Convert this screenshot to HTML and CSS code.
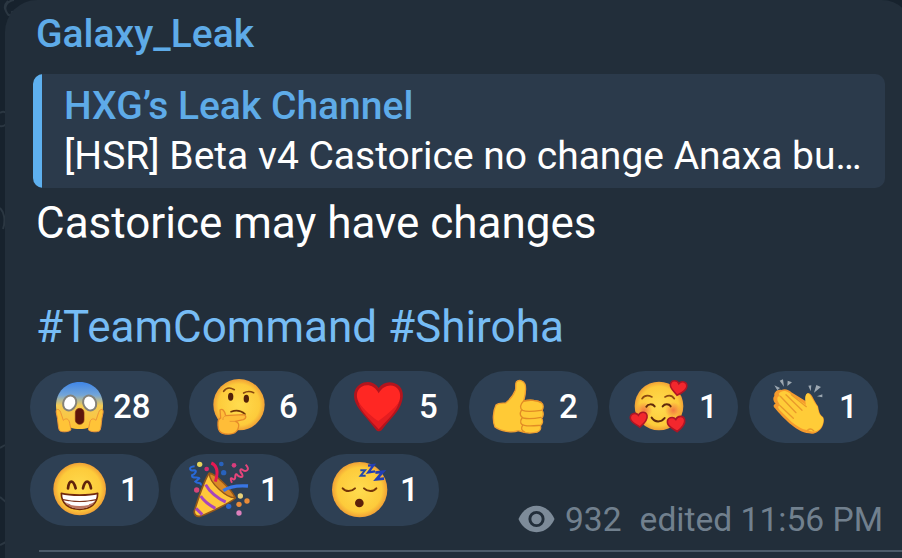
FILE: index.html
```html
<!DOCTYPE html>
<html lang="en">
<head>
    <meta charset="UTF-8">
    <meta name="viewport" content="width=device-width, initial-scale=1.0">
    <link rel="stylesheet" href="styles.css">
    <title>Galaxy_Leak</title>
</head>
<body>

<!-- Chat wallpaper doodles -->
<svg class="wallpaper" width="30" height="558" viewBox="0 0 30 558">
    <path d="M14 0C7 1 3 7 7 13C9 17 13 15 12 11M8 1C5 4 4 8 6 11M0 113C4 110 8 113 8 118C8 124 4 127 0 126M0 208C4 212 6 220 3 229M0 448L5 445M0 497L7 503M0 545L6 542"/>
</svg>

<div class="bubble">
    <div class="sender">Galaxy_Leak</div>

    <div class="quote">
        <div class="quote-title">HXG’s Leak Channel</div>
        <div class="quote-text">[HSR] Beta v4 Castorice no change Anaxa bu…</div>
    </div>

    <div class="message">Castorice may have changes<br><br><span class="hashtag">#TeamCommand</span> <span class="hashtag">#Shiroha</span></div>

    <div class="reactions">
        <!-- Screaming -->
        <div class="reaction wide">
            <svg viewBox="78 45 192 192">
                <defs>
                    <linearGradient id="scream" x1="0" y1="0" x2="0" y2="1">
                        <stop offset="0" stop-color="#3f86e8"/>
                        <stop offset=".28" stop-color="#73a5d8"/>
                        <stop offset=".5" stop-color="#f3cb55"/>
                        <stop offset="1" stop-color="#ffc334"/>
                    </linearGradient>
                    <radialGradient id="face">
                        <stop offset="0" stop-color="#ffdc4f"/>
                        <stop offset=".8" stop-color="#fdcb3b"/>
                        <stop offset="1" stop-color="#f0a036"/>
                    </radialGradient>
                </defs>
                <path d="M179 66C220 66 249 96 249 137C249 180 219 207 179 207C139 207 108 180 108 137C108 96 138 66 179 66Z" fill="url(#scream)"/>
                <ellipse cx="149" cy="129" rx="19" ry="23" fill="#fff" stroke="#84827a" stroke-width="6" transform="rotate(25 149 129)"/>
                <ellipse cx="209" cy="129" rx="19" ry="23" fill="#fff" stroke="#84827a" stroke-width="6" transform="rotate(-25 209 129)"/>
                <rect x="166" y="145" width="26" height="48" rx="13" fill="#5d160b" stroke="#7b2c10" stroke-width="2"/>
                <path d="M109 159C106 145 118 145 122 157L130 181C139 172 148 178 149 190L153 209C149 216 123 218 118 211C113 199 115 181 109 159Z" fill="#ffc438" stroke="#ed9638" stroke-width="3"/>
                <path d="M249 159C252 145 240 145 236 157L228 181C219 172 210 178 209 190L205 209C209 216 235 218 240 211C245 199 243 181 249 159Z" fill="#ffc438" stroke="#ed9638" stroke-width="3"/>
            </svg>
            <span class="count">28</span>
        </div>

        <!-- Thinking -->
        <div class="reaction">
            <svg viewBox="75 45 192 192">
                <circle cx="177" cy="134" r="77" fill="url(#face)"/>
                <path d="M131 94C139 82 151 82 163 89M191 99C201 93 210 93 221 98" fill="none" stroke="#874811" stroke-width="5" stroke-linecap="round"/>
                <ellipse cx="152" cy="110" rx="8" ry="12" fill="#522109"/>
                <ellipse cx="199" cy="116" rx="8" ry="12" fill="#522109"/>
                <path d="M153 155C169 149 184 152 195 162" fill="none" stroke="#713609" stroke-width="5" stroke-linecap="round"/>
                <path d="M120 150C127 145 134 151 137 167L188 164C200 164 200 175 190 179L166 184C178 188 178 196 174 206C170 219 155 224 136 222C118 221 114 211 114 196C113 184 116 176 122 174Z" fill="#ffbd38" stroke="#e78b2a" stroke-width="4" stroke-linejoin="round"/>
                <path d="M137 167C130 170 128 175 129 180M149 184L166 184" fill="none" stroke="#e99732" stroke-width="3"/>
            </svg>
            <span class="count">6</span>
        </div>

        <!-- Heart -->
        <div class="reaction">
            <svg viewBox="75 45 192 192">
                <path d="M176 84C163 65 139 61 120 73C98 87 98 116 111 137C125 160 152 187 166 207C171 215 179 217 186 209C202 188 230 161 241 138C253 113 252 86 231 73C211 61 189 66 176 84Z" fill="#b3141d"/>
                <path d="M176 100C164 76 142 71 125 80C106 91 108 115 119 132C135 156 162 180 175 195C193 176 222 152 235 130C244 113 243 90 226 80C209 71 188 78 176 100Z" fill="#ff2723"/>
                <path d="M115 125C132 151 160 173 175 183C193 170 222 148 237 126C232 154 194 188 176 208C157 184 120 155 115 125Z" fill="#e41d20"/>
            </svg>
            <span class="count">5</span>
        </div>

        <!-- Thumbs up -->
        <div class="reaction">
            <svg viewBox="75 45 192 192">
                <path d="M169 66C175 58 191 61 195 73C200 89 195 108 191 123C207 119 232 120 244 128C252 134 250 145 246 150C252 159 250 170 245 175C250 184 247 193 241 197C245 209 237 218 221 218C206 221 185 216 175 212C155 220 121 213 105 201C97 183 99 153 108 135C116 128 126 130 137 129C150 119 161 104 166 91C169 82 165 73 169 66Z" fill="#ffca36" stroke="#ef9e31" stroke-width="4"/>
                <path d="M244 151C222 154 198 156 188 151C179 146 179 134 191 123C207 119 232 120 244 128M184 151C178 161 181 171 190 174C207 178 228 175 243 172M186 174C178 185 182 195 193 196C208 200 228 197 240 196M188 196C182 204 184 212 194 216" fill="none" stroke="#e28c25" stroke-width="4" stroke-linecap="round"/>
            </svg>
            <span class="count">2</span>
        </div>

        <!-- Smiling with hearts -->
        <div class="reaction">
            <svg viewBox="75 45 192 192">
                <defs>
                    <radialGradient id="blush">
                        <stop offset="0" stop-color="#f37b42"/>
                        <stop offset="1" stop-color="#f37b42" stop-opacity="0"/>
                    </radialGradient>
                    <path id="heart" d="M0-12C-7-24-27-22-27-5C-27 8-9 17-1 26C9 20 28 8 27-7C26-22 7-24 0-12Z" fill="#f2272d" stroke="#ac1525" stroke-width="5"/>
                </defs>
                <circle cx="177" cy="138" r="73" fill="url(#face)"/>
                <circle cx="132" cy="151" r="25" fill="url(#blush)"/>
                <circle cx="220" cy="151" r="25" fill="url(#blush)"/>
                <path d="M126 116C134 105 146 106 156 111M195 111C206 105 217 107 223 116" fill="none" stroke="#8d4b12" stroke-width="5" stroke-linecap="round"/>
                <path d="M139 140C144 131 158 131 164 139M188 139C194 131 207 131 212 139M155 173C165 188 183 188 194 174" fill="none" stroke="#60290c" stroke-width="6" stroke-linecap="round"/>
                <use href="#heart" transform="translate(235 82) rotate(8) scale(.92)"/>
                <use href="#heart" transform="translate(117 177) rotate(-8) scale(.94)"/>
                <use href="#heart" transform="translate(229 190) rotate(-8) scale(.97)"/>
            </svg>
            <span class="count">1</span>
        </div>

        <!-- Clapping -->
        <div class="reaction">
            <svg viewBox="75 45 192 192">
                <path d="M103 76L120 84L112 91ZM119 62L129 58L132 80ZM143 62L156 67L142 78ZM205 77L214 76L212 94ZM229 75L243 81L222 98ZM247 103V112L231 109Z" fill="#9ca7b1"/>
                <path d="M103 108C101 97 112 87 124 90C136 85 147 90 154 97L198 124C194 111 199 97 207 100C216 102 221 121 234 139C237 154 239 165 249 171C254 178 251 193 246 202C236 217 221 225 207 220C187 220 163 202 148 190C137 180 115 158 105 145C98 139 101 132 107 132C99 123 98 113 103 108Z" fill="#f69b2d"/>
                <path d="M116 101C124 91 136 90 147 98L198 135C195 119 194 103 203 100C211 100 219 123 233 142C235 158 239 167 249 173C252 183 249 195 240 206C228 217 216 217 204 210C189 211 172 199 155 186L119 150C111 141 115 136 122 139L113 123C110 112 114 107 120 109Z" fill="#ffcc38"/>
                <path d="M121 109L168 158M138 104L186 151M121 138L160 175M154 104L199 140M203 210C210 205 216 207 221 212" fill="none" stroke="#ea9a2b" stroke-width="4" stroke-linecap="round"/>
            </svg>
            <span class="count">1</span>
        </div>

        <!-- Beaming -->
        <div class="reaction">
            <svg viewBox="138 39 192 192">
                <circle cx="239" cy="132" r="79" fill="url(#face)"/>
                <path d="M204 130C207 103 220 103 227 130M249 130C255 103 268 103 273 130" fill="none" stroke="#60230b" stroke-width="8" stroke-linecap="round"/>
                <path d="M184 145C211 152 267 152 293 145C293 176 272 193 239 193C206 193 184 176 184 145Z" fill="#fff" stroke="#71290c" stroke-width="5" stroke-linejoin="round"/>
                <path d="M189 164C219 171 259 171 289 164M202 180C224 187 253 187 276 180" fill="none" stroke="#80371f" stroke-width="4"/>
                <path d="M193 169C203 184 219 191 239 191C260 191 276 184 285 169C277 176 266 180 239 180C213 180 200 176 193 169Z" fill="#bd7762"/>
                <path d="M205 169C227 173 252 173 273 169L266 180C248 184 230 184 212 180Z" fill="#fff"/>
            </svg>
            <span class="count">1</span>
        </div>

        <!-- Party popper -->
        <div class="reaction">
            <svg viewBox="78 39 192 192">
                <path d="M148 84C166 86 213 133 226 159C210 174 148 204 120 214C109 216 101 208 103 198C113 167 132 105 148 84Z" fill="#ffc83b" stroke="#94571b" stroke-width="5" stroke-linejoin="round"/>
                <path d="M148 86C166 86 217 136 225 158C200 159 148 113 148 86Z" fill="#d98a25" stroke="#94571b" stroke-width="4"/>
                <path d="M137 119C148 140 173 161 197 171M122 153C132 169 149 181 166 190M108 190L127 209" fill="none" stroke="#a846bb" stroke-width="9"/>
                <path d="M154 54C175 63 174 85 166 110" fill="none" stroke="#e71952" stroke-width="9"/>
                <path d="M190 137C210 122 234 121 264 123" fill="none" stroke="#3976e4" stroke-width="10"/>
                <path d="M104 64C84 66 88 79 102 76C114 76 104 89 96 91C94 103 117 93 118 100L106 110C113 118 126 110 122 121" fill="none" stroke="#2869d8" stroke-width="6"/>
                <path d="M257 59C274 76 255 82 247 74C239 70 239 80 246 87C253 102 235 96 230 88C222 86 230 105 220 103C211 95 210 102 216 113" fill="none" stroke="#e5457b" stroke-width="6"/>
                <circle cx="119" cy="58" r="8" fill="#e4d45b"/>
                <circle cx="140" cy="72" r="7" fill="#d52d70"/>
                <circle cx="184" cy="57" r="7" fill="#2862bd"/>
                <circle cx="191" cy="83" r="8" fill="#2862bd"/>
                <circle cx="222" cy="61" r="7" fill="#d83d7c"/>
                <circle cx="110" cy="135" r="8" fill="#d84578"/>
                <circle cx="206" cy="184" r="8" fill="#2b67cf"/>
                <circle cx="241" cy="153" r="8" fill="#e8d27a"/>
                <circle cx="237" cy="178" r="8" fill="#e98b38"/>
                <circle cx="261" cy="168" r="8" fill="#e98b38"/>
                <circle cx="237" cy="204" r="8" fill="#dd80bd"/>
            </svg>
            <span class="count">1</span>
        </div>

        <!-- Sleeping -->
        <div class="reaction">
            <svg viewBox="78 39 192 192">
                <circle cx="179" cy="134" r="83" fill="url(#face)"/>
                <path d="M128 130C137 141 154 141 165 130M192 130C203 141 220 141 229 130" fill="none" stroke="#743508" stroke-width="6" stroke-linecap="round"/>
                <circle cx="178" cy="174" r="13" fill="#5c200a"/>
                <path d="M181 76H195L182 92H197" fill="none" stroke="#2449ab" stroke-width="6"/>
                <path d="M204 62L221 60L205 82L225 79" fill="none" stroke="#233fb6" stroke-width="7"/>
                <path d="M226 83L249 80L229 103L252 101" fill="none" stroke="#233fb6" stroke-width="8"/>
            </svg>
            <span class="count">1</span>
        </div>

        <div class="meta">
            <svg class="eye" width="37" height="28" viewBox="0 0 38 28">
                <path d="M19 .5C29 .5 35 8 37.5 14C35 20 29 27.500 19 27.500C9 27.500 3 20 .5 14C3 8 9 .5 19 .5Z" fill="#7d8b99"/>
                <circle cx="19" cy="14" r="6.800" fill="#7d8b99" stroke="#222e3a" stroke-width="3"/>
            </svg>
            <span class="views">932</span>
            <span class="time">edited 11:56 PM</span>
        </div>
    </div>

    <div class="divider"></div>
</div>

</body>
</html>
```

FILE: styles.css
```css
body {
    margin: 0;
    height: 558px;
    overflow: hidden;
    background-color: #17222d;
    font-family: Roboto, sans-serif;
    color: #fff;
}

.wallpaper {
    position: absolute;
    left: 0;
    top: 0;
    fill: none;
    stroke: #2b3742;
    stroke-width: 2;
}

.bubble {
    position: relative;
    box-sizing: border-box;
    width: 907px;
    height: 558px;
    margin-left: 5px;
    padding: 12px 0 0 28px;
    background-color: #222e3a;
    border-radius: 32px 30px 0 0;
}

.sender {
    margin-left: 3px;
    font-size: 39px;
    font-weight: 500;
    line-height: 44px;
    color: #5eabe8;
}

.quote {
    box-sizing: border-box;
    width: 852px;
    height: 114px;
    margin-top: 18px;
    padding: 7px 0 0 31px;
    background: linear-gradient(to right, #5eb0ef 9px, #2b3a4b 9px);
    border-radius: 10px;
    white-space: nowrap;
}

.quote-title {
    font-size: 39px;
    font-weight: 500;
    line-height: 50px;
    color: #5eabe8;
}

.quote-text {
    font-size: 39px;
    line-height: 50px;
}

.message {
    margin: 9px 0 0 3px;
    font-size: 44px;
    line-height: 52px;
}

.hashtag {
    color: #76bcf5;
}

.reactions {
    display: flex;
    flex-wrap: wrap;
    align-items: flex-start;
    gap: 11px;
    width: 852px;
    margin: 18px 0 0 -3px;
}

.reaction {
    display: flex;
    align-items: center;
    box-sizing: border-box;
    width: 129px;
    height: 72px;
    padding-left: 16px;
    background-color: #2e4054;
    border-radius: 36px;
}

.reaction svg {
    width: 64px;
    height: 64px;
}

.count {
    margin-left: 10px;
    font-size: 33px;
    font-weight: 500;
    line-height: 40px;
}

.wide {
    width: 148px;
}

.wide .count {
    margin-left: 3px;
}

.meta {
    display: flex;
    align-items: center;
    height: 36px;
    margin: 47px -1px 0 auto;
    font-size: 33.6px;
    color: #71808e;
    white-space: nowrap;
}

.views {
    margin-left: 10px;
}

.time {
    margin-left: 18px;
}

.divider {
    height: 2px;
    margin: 13px 0 0 6px;
    background-color: #4d5b69;
}
```
